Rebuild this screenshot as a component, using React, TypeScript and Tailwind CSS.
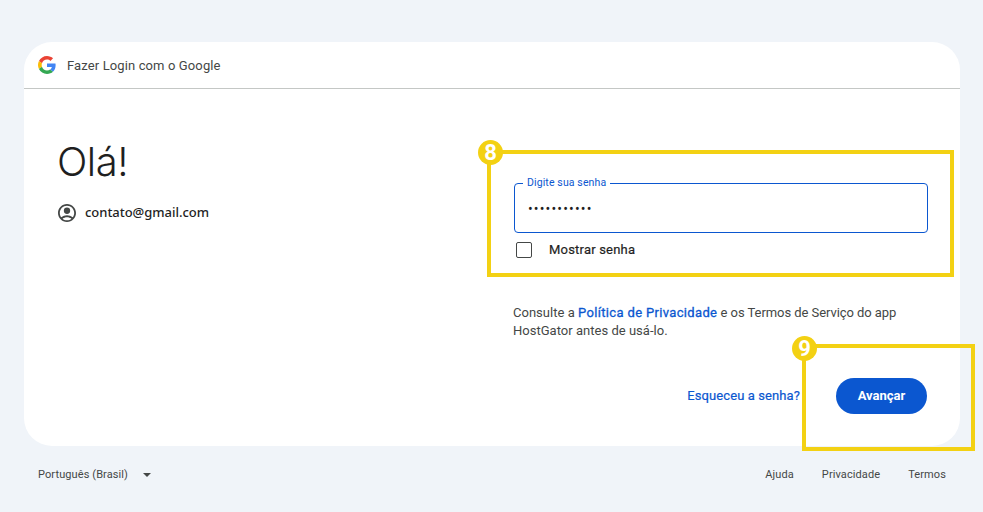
import React from "react";

function GoogleLogo() {
  return (
    <svg width="18" height="18" viewBox="0 0 48 48">
      <path fill="#EA4335" d="M24 9.5c3.54 0 6.71 1.22 9.21 3.6l6.85-6.85C35.9 2.38 30.47 0 24 0 14.62 0 6.51 5.38 2.56 13.22l7.98 6.19C12.43 13.72 17.74 9.5 24 9.5z" />
      <path fill="#4285F4" d="M46.98 24.55c0-1.57-.15-3.09-.38-4.55H24v9.02h12.94c-.58 2.96-2.26 5.48-4.78 7.18l7.73 6c4.51-4.18 7.09-10.36 7.09-17.65z" />
      <path fill="#FBBC05" d="M10.53 28.59c-.48-1.45-.76-2.99-.76-4.59s.27-3.14.76-4.59l-7.98-6.19C.92 16.46 0 20.12 0 24c0 3.88.92 7.54 2.56 10.78l7.97-6.19z" />
      <path fill="#34A853" d="M24 48c6.48 0 11.93-2.13 15.89-5.81l-7.73-6c-2.15 1.45-4.92 2.3-8.16 2.3-6.26 0-11.57-4.22-13.47-9.91l-7.98 6.19C6.51 42.62 14.62 48 24 48z" />
    </svg>
  );
}

function AccountIcon() {
  return (
    <svg width="18" height="18" viewBox="2 2 20 20" fill="#444746">
      <path d="M12 2C6.48 2 2 6.48 2 12s4.48 10 10 10 10-4.48 10-10S17.52 2 12 2zM7.07 18.28C8.5 17.2 10.2 16.6 12 16.6s3.5.6 4.93 1.68C15.57 19.36 13.86 20 12 20s-3.57-.64-4.93-1.72zm11.29-1.45C16.55 15.4 14.35 14.6 12 14.6s-4.55.8-6.36 2.23C4.62 15.54 4 13.84 4 12c0-4.41 3.59-8 8-8s8 3.59 8 8c0 1.84-.62 3.54-1.64 4.83z" />
      <circle cx="12" cy="9.5" r="3.5" />
    </svg>
  );
}

export default function App() {
  return (
    <div className="relative h-[512px] w-[983px] overflow-hidden bg-[#f0f4f9] pt-[42px] font-['Roboto',sans-serif] text-[#1f1f1f]">
      <div className="mx-[24px] h-[404px] w-[936px] rounded-[28px] bg-white">
        <div className="flex h-[47px] items-center gap-[11px] border-b border-[#c4c7c5] pl-[14px]">
          <GoogleLogo />
          <span className="pt-[2px] text-[13px] tracking-[0.12px] text-[#444746]">Fazer Login com o Google</span>
        </div>
        <div className="flex">
          <div className="w-[490px] pl-[34px] pt-[47px]">
            <h1 className="-ml-[1px] font-['Inter',sans-serif] text-[40px] leading-[52px] font-light tracking-[-0.5px]">Olá!</h1>
            <div className="mt-[15px] flex items-center gap-[9px]">
              <AccountIcon />
              <span className="font-['Noto_Sans',sans-serif] text-[13px] font-medium tracking-[-0.03px] text-[#1f1f1f]">contato@gmail.com</span>
            </div>
          </div>
          <div className="w-[414px] pt-[94px]">
            <div className="relative h-[50px] rounded-[4px] border border-[#0b57d0]">
              <span className="absolute -top-[8px] left-[8px] bg-white px-[4px] text-[10.5px] leading-[14px] tracking-[0.12px] text-[#0b57d0]">Digite sua senha</span>
              <div className="pl-[13px] pt-[15px] text-[14px] leading-[20px] tracking-[1.15px] text-[#1f1f1f]">•••••••••••</div>
            </div>
            <div className="mt-[9px] flex items-center gap-[17px] pl-[2px]">
              <div className="h-[16px] w-[16px] rounded-[2px] border border-[#444746]" />
              <span className="text-[13px] leading-[16px] tracking-[0.2px] [-webkit-text-stroke:0.2px_#1f1f1f]">Mostrar senha</span>
            </div>
            <p className="-ml-[1px] mt-[46px] text-[13px] leading-[18px] tracking-[0.02px] text-[#444746]">
              Consulte a <span className="tracking-[0.34px] text-[#0b57d0] [-webkit-text-stroke:0.3px_#0b57d0]">Política de Privacidade</span> <span className="tracking-[-0.06px]">e os Termos de Serviço do app</span> HostGator antes de usá-lo.
            </p>
            <div className="mt-[38px] flex items-center justify-end gap-[36px] pr-[1px]">
              <span className="text-[13px] tracking-[0.1px] text-[#0b57d0] [-webkit-text-stroke:0.2px_#0b57d0]">Esqueceu a senha?</span>
              <button className="flex h-[36px] w-[91px] items-center justify-center rounded-full bg-[#0b57d0] text-[13px] font-bold text-white">Avançar</button>
            </div>
          </div>
        </div>
      </div>

      <div className="flex items-center justify-between pl-[38px] pr-[37px] pt-[21px] text-[11px] text-[#444746]">
        <div className="flex items-center gap-[15px]">
          <span className="tracking-[0.1px]">Português (Brasil)</span>
          <div className="h-0 w-0 border-x-[4px] border-t-[4px] border-x-transparent border-t-[#444746]" />
        </div>
        <div className="flex gap-[28px] tracking-[0.1px]">
          <span>Ajuda</span>
          <span>Privacidade</span>
          <span>Termos</span>
        </div>
      </div>

      <div className="absolute left-[487px] top-[150px] h-[127px] w-[467px] border-4 border-[#f3d113]">
        <div className="absolute -left-[13px] -top-[14px] flex h-[25px] w-[25px] items-center justify-center rounded-full bg-[#f3d113] text-[22px] font-bold text-white">8</div>
      </div>
      <div className="absolute left-[802px] top-[344px] h-[107px] w-[173px] border-4 border-[#f3d113]">
        <div className="absolute -left-[14px] -top-[12px] flex h-[25px] w-[25px] items-center justify-center rounded-full bg-[#f3d113] text-[22px] font-bold text-white">9</div>
      </div>
    </div>
  );
}
